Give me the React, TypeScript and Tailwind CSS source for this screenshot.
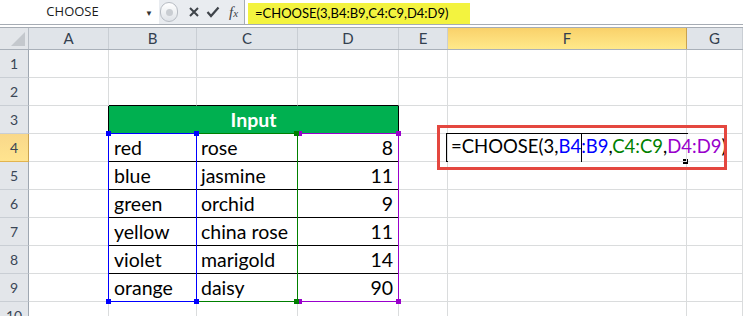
import React from 'react';

const colW = ['w-[29px]', 'w-[80px]', 'w-[88px]', 'w-[101px]', 'w-[101px]', 'w-[49px]', 'w-[239px]', 'flex-1'];
const letters = ['', 'A', 'B', 'C', 'D', 'E', 'F', 'G'];

const data: [string, string, string][] = [
  ['red', 'rose', '8'],
  ['blue', 'jasmine', '11'],
  ['green', 'orchid', '9'],
  ['yellow', 'china rose', '11'],
  ['violet', 'marigold', '14'],
  ['orange', 'daisy', '90'],
];

const Cell = ({ w, className = '', children }: { w: string; className?: string; children?: React.ReactNode }) => (
  <div className={`${w} shrink-0 h-full border-r border-b border-[#dadcdd] ${className}`}>{children}</div>
);

const RowHead = ({ n, active }: { n: number; active?: boolean }) => (
  <div
    className={`w-[29px] shrink-0 h-full flex items-center justify-center text-[14px] text-[#3a4656] border-b ${
      active
        ? 'bg-gradient-to-b from-[#f9d88a] to-[#ffe48f] border-[#e2b44f] border-r border-r-[#c9a24f]'
        : 'bg-[#e3e6ea] border-[#c9ced4] border-r border-r-[#9fa7b1]'
    }`}
  >
    {n}
  </div>
);

export default function App() {
  return (
    <div className="relative w-[743px] h-[316px] overflow-hidden bg-white font-['Lato',sans-serif] text-black">
      {/* formula bar */}
      <div className="h-[28px] flex border-b border-[#a6acb4] bg-white">
        <div className="w-[159px] h-[25px] flex items-center border-b border-[#a6acb4] font-['Open_Sans',sans-serif] text-[13px] text-[#1b1b1b]">
          <span className="flex-1 text-center">CHOOSE</span>
          <span className="text-[8px] text-[#333] mr-[6px] mt-[2px]">▼</span>
        </div>
        <div className="w-[85px] h-[25px] flex items-center bg-[#e9ecf0] border-b border-[#a6acb4] text-[#4a4f55]">
          <div className="w-[18px] h-[20px] rounded-full border border-[#b7bcc3] bg-gradient-to-b from-white to-[#dfe3e8] flex items-center justify-center ml-[1px]">
            <div className="w-[7px] h-[7px] rounded-full bg-[#c9cdd2]" />
          </div>
          <svg width="12" height="12" viewBox="0 0 12 12" className="ml-[10px]">
            <path d="M2 2 L10 10 M10 2 L2 10" stroke="#3f444a" strokeWidth="2" />
          </svg>
          <svg width="14" height="12" viewBox="0 0 14 12" className="ml-[6px]">
            <path d="M1.5 6 L5 10 L12.5 1.5" stroke="#3f444a" strokeWidth="2.2" fill="none" />
          </svg>
          <span className="ml-[9px] font-['Liberation_Serif',serif] italic text-[15px] text-[#3f444a] leading-none">
            f<span className="text-[11px]">x</span>
          </span>
        </div>
        <div className="flex-1 h-[25px] border-b border-l border-[#a6acb4] pt-[3px] pl-[3px]">
          <div className="w-[222px] h-[21px] bg-[#f3f33f] flex items-center pl-[7px] text-[13px] font-['Lato',sans-serif]">
            =CHOOSE(3,B4:B9,C4:C9,D4:D9)
          </div>
        </div>
      </div>

      {/* column headers */}
      <div className="h-[22px] flex border-b border-[#a9b0b9]">
        {letters.map((l, i) =>
          i === 0 ? (
            <div key={i} className="w-[29px] shrink-0 h-full bg-[#e3e6ea] border-r border-[#b7bdc5] flex items-end justify-end p-[3px]">
              <svg width="14" height="14" viewBox="0 0 14 14">
                <polygon points="14,0 14,14 0,14" fill="#c4c8cd" />
              </svg>
            </div>
          ) : (
            <div
              key={i}
              className={`${colW[i]} shrink-0 h-full flex items-center justify-center text-[15px] text-[#33404f] border-r ${
                l === 'F'
                  ? 'bg-gradient-to-b from-[#f9d16a] to-[#ffe98a] border-[#c9a24f]'
                  : 'bg-[#e0e4e9] border-[#c9ced4]'
              }`}
            >
              {l}
            </div>
          )
        )}
      </div>

      {/* rows 1-2 */}
      {[1, 2].map((n) => (
        <div key={n} className="h-[28px] flex">
          <RowHead n={n} />
          {colW.slice(1).map((w, i) => (
            <Cell key={i} w={w} className={n === 2 && i >= 1 && i <= 3 ? 'border-b-black' : ''} />
          ))}
        </div>
      ))}

      {/* row 3 - header */}
      <div className="h-[28px] flex">
        <RowHead n={3} />
        <Cell w="w-[80px]" className="border-r-black" />
        <div className="w-[290px] shrink-0 h-full bg-[#00b050] border-r border-b border-black flex items-center justify-center text-white font-bold text-[19.5px]">
          Input
        </div>
        <Cell w="w-[49px]" />
        <Cell w="w-[239px]" />
        <Cell w="flex-1" />
      </div>

      {/* rows 4-9 */}
      {data.map((r, idx) => (
        <div key={idx} className="h-[28px] flex text-[19.5px]">
          <RowHead n={idx + 4} active={idx === 0} />
          <Cell w="w-[80px]" />
          <Cell w="w-[88px]" className="border-b-black flex items-center pl-[5px] whitespace-nowrap">{r[0]}</Cell>
          <Cell w="w-[101px]" className="border-b-black flex items-center pl-[4px] whitespace-nowrap">{r[1]}</Cell>
          <Cell w="w-[101px]" className="border-b-black flex items-center justify-end pr-[5px]">{r[2]}</Cell>
          <Cell w="w-[49px]" />
          <Cell w="w-[239px]" className={idx === 0 ? 'relative z-20 flex items-center pl-[3px] whitespace-nowrap overflow-visible text-[18.5px]' : ''}>
            {idx === 0 && (
              <span>
                =CHOOSE(3,<span className="text-[#0000ff]">B4</span>
                <span className="inline-block w-px h-[28px] bg-black align-middle -mr-px" />
                <span className="text-[#0000ff]">:B9</span>,<span className="text-[#008000]">C4:C9</span>,
                <span className="text-[#9900cc]">D4:D9</span>)
              </span>
            )}
          </Cell>
          <Cell w="flex-1" />
        </div>
      ))}
      <div className="h-[28px] flex">
        <RowHead n={10} />
        {colW.slice(1).map((w, i) => (
          <Cell key={i} w={w} />
        ))}
      </div>

      {/* range highlights */}
      <div className="absolute left-[297px] top-[133px] w-[102px] h-[169px] border border-[#9900cc]" />
      <div className="absolute left-[196px] top-[133px] w-[102px] h-[169px] border border-[#008000]" />
      <div className="absolute left-[108px] top-[133px] w-[89px] h-[169px] border border-[#0000ff]" />
      {[
        ['left-[396px]', 'top-[131px]', 'bg-[#9900cc]'],
        ['left-[396px]', 'top-[299px]', 'bg-[#9900cc]'],
        ['left-[297px]', 'top-[131px]', 'bg-[#9900cc]'],
        ['left-[297px]', 'top-[299px]', 'bg-[#9900cc]'],
        ['left-[294px]', 'top-[131px]', 'bg-[#008000]'],
        ['left-[294px]', 'top-[299px]', 'bg-[#008000]'],
        ['left-[106px]', 'top-[131px]', 'bg-[#0000ff]'],
        ['left-[194px]', 'top-[131px]', 'bg-[#0000ff]'],
        ['left-[106px]', 'top-[299px]', 'bg-[#0000ff]'],
        ['left-[194px]', 'top-[299px]', 'bg-[#0000ff]'],
      ].map(([l, t, c], i) => (
        <div key={i} className={`absolute ${l} ${t} ${c} w-[5px] h-[5px]`} />
      ))}

      {/* edit box around F4 */}
      <div className="absolute left-[446px] top-[133px] w-[242px] h-[29px] border-t border-l border-black" />
      <div className="absolute left-[446px] top-[161px] w-[237px] h-px bg-black" />
      <div className="absolute left-[683px] top-[159px] w-[5px] h-[5px] bg-black" />

      {/* red annotation */}
      <div className="absolute left-[437px] top-[125px] w-[290px] h-[45px] border-[3px] border-[#e4473f] z-30" />
    </div>
  );
}
